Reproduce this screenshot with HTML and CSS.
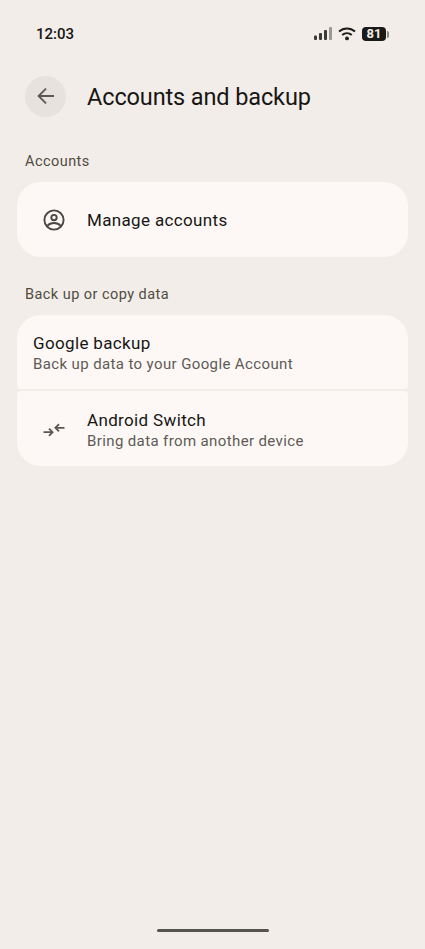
FILE: index.html
```html
<!DOCTYPE html>
<html lang="en">
<head>
    <meta charset="UTF-8">
    <meta name="viewport" content="width=device-width, initial-scale=1.0">
    <title>Accounts and backup</title>
    <link rel="stylesheet" href="styles.css">
</head>
<body>
    <div class="status-bar">
        <span class="clock">12:03</span>
        <div class="status-icons">
            <svg class="signal" width="19" height="14" viewBox="0 0 19 14">
                <rect x="1" y="8.5" width="3" height="4.5" rx="1" fill="#3a3a38"/>
                <rect x="6" y="6" width="3" height="7" rx="1" fill="#3a3a38"/>
                <rect x="11" y="3" width="3" height="10" rx="1" fill="#3a3a38"/>
                <rect x="16" y="0" width="3" height="13" rx="1" fill="#9a9894"/>
            </svg>
            <svg class="wifi" width="18" height="14" viewBox="0 0 18 14">
                <path d="M1 4.6C5.6 0.4 12.4 0.4 17 4.6" fill="none" stroke="#1c1c1a" stroke-width="2"/>
                <path d="M4.2 8C7 5.5 11 5.5 13.8 8" fill="none" stroke="#1c1c1a" stroke-width="2"/>
                <circle cx="9" cy="11.4" r="1.9" fill="#1c1c1a"/>
            </svg>
            <div class="battery">
                <span class="battery-level">81</span>
                <span class="battery-tip"></span>
            </div>
        </div>
    </div>

    <header class="top-bar">
        <button class="back-button" aria-label="Back">
            <svg width="20" height="20" viewBox="0 0 20 20">
                <path d="M18 10H3M10 2.6L2.6 10L10 17.4" fill="none" stroke="#5b5853" stroke-width="1.9"/>
            </svg>
        </button>
        <h1 class="page-title">Accounts and backup</h1>
    </header>

    <h2 class="section-label">Accounts</h2>
    <div class="card-group">
        <div class="row row-single">
            <svg class="row-icon" width="22" height="22" viewBox="0 0 22 22">
                <circle cx="11" cy="11" r="9.6" fill="none" stroke="#4a4845" stroke-width="1.9"/>
                <circle cx="11" cy="8.6" r="2.7" fill="none" stroke="#4a4845" stroke-width="1.9"/>
                <path d="M4.2 17C6 14.9 8.4 14 11 14C13.6 14 16 14.9 17.8 17" fill="none" stroke="#4a4845" stroke-width="1.9"/>
            </svg>
            <div class="row-text">
                <div class="row-title">Manage accounts</div>
            </div>
        </div>
    </div>

    <h2 class="section-label section-label-next">Back up or copy data</h2>
    <div class="card-group">
        <div class="row row-first">
            <div class="row-text">
                <div class="row-title">Google backup</div>
                <div class="row-summary">Back up data to your Google Account</div>
            </div>
        </div>
        <div class="row row-last">
            <svg class="row-icon" width="22" height="22" viewBox="0 0 22 22">
                <path d="M0.5 13.2H9.5M6 9.6L9.6 13.2L6 16.8" fill="none" stroke="#5b5853" stroke-width="1.8"/>
                <path d="M21.5 8.8H12.5M16 5.2L12.4 8.8L16 12.4" fill="none" stroke="#5b5853" stroke-width="1.8"/>
            </svg>
            <div class="row-text">
                <div class="row-title">Android Switch</div>
                <div class="row-summary">Bring data from another device</div>
            </div>
        </div>
    </div>

    <div class="home-indicator"></div>
</body>
</html>
```

FILE: styles.css
```css
html, body { height: 100%; }
body { margin: 0; background: #f2ede9; font-family: Roboto, "Noto Sans", sans-serif; color: #171614; display: flex; flex-direction: column; box-sizing: border-box; overflow: hidden; }

.status-bar { display: flex; justify-content: space-between; align-items: center; height: 22px; margin-top: 23px; padding: 0 36px 0 36px; }
.clock { font-size: 15px; font-weight: 500; color: #171614; }
.status-icons { display: flex; align-items: center; gap: 6px; }
.battery { display: flex; align-items: center; gap: 1px; }
.battery-level { background: #1a1a18; color: #f2ede9; font-size: 13px; font-weight: 700; line-height: 14px; width: 24px; text-align: center; border-radius: 4px; }
.battery-tip { width: 2px; height: 7px; background: #8a8884; border-radius: 0 2px 2px 0; }

.top-bar { display: flex; align-items: center; gap: 21px; margin-top: 30px; padding-left: 25px; height: 42px; }
.back-button { width: 41px; height: 41px; border: none; border-radius: 50%; background: #e7e2dd; padding: 0; display: flex; align-items: center; justify-content: center; }
.page-title { margin: 0; padding-top: 2px; font-size: 23.5px; font-weight: 400; letter-spacing: -0.12px; color: #171614; }

.section-label { margin: 35px 0 0 25px; font-size: 14.5px; line-height: 20px; font-weight: 400; letter-spacing: 0.45px; color: #4f4c3f; }
.section-label-next { margin-top: 28px; }

.card-group { display: flex; flex-direction: column; gap: 2px; margin: 10px 17px 0 17px; }
.row { display: flex; align-items: center; background: #fdf8f5; padding-left: 16px; height: 75px; box-sizing: border-box; }
.row-single { border-radius: 24px; }
.row-first { height: 74px; padding-top: 2px; border-radius: 24px 24px 4px 4px; }
.row-last { padding-top: 2px; border-radius: 4px 4px 24px 24px; }
.row-icon { flex: none; margin: 0 22px 0 10px; }
.row-title { font-size: 17px; line-height: 22px; letter-spacing: 0.35px; color: #171614; }
.row-summary { font-size: 15px; line-height: 20px; letter-spacing: 0.38px; color: #5e5b56; }

.home-indicator { width: 112px; height: 3px; background: #55534f; border-radius: 2px; margin: auto auto 17px auto; }
```
